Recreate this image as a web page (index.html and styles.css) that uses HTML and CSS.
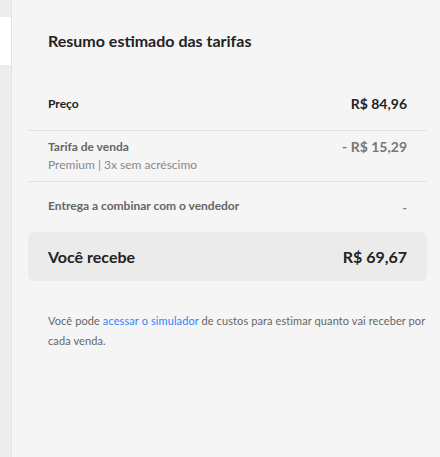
FILE: index.html
```html
<!DOCTYPE html>
<html lang="pt-BR">
<head>
<meta charset="utf-8">
<link rel="stylesheet" href="styles.css">
</head>
<body>
<div class="page">
  <aside class="side"><div class="side-card"></div></aside>
  <main class="panel">
    <h2 class="title">Resumo estimado das tarifas</h2>
    <div class="row row-price">
      <span class="label dark">Preço</span>
      <span class="value dark">R$ 84,96</span>
    </div>
    <div class="row row-fee">
      <div class="label-group">
        <span class="label">Tarifa de venda</span>
        <span class="sub">Premium | 3x sem acréscimo</span>
      </div>
      <span class="value">- R$ 15,29</span>
    </div>
    <div class="row row-ship">
      <span class="label">Entrega a combinar com o vendedor</span>
      <span class="value small">-</span>
    </div>
    <div class="total">
      <span>Você recebe</span>
      <span>R$ 69,67</span>
    </div>
    <p class="note">Você pode <a href="#">acessar o simulador</a> de custos para estimar quanto vai receber por cada venda.</p>
  </main>
</div>
</body>
</html>
```
FILE: styles.css
```css
* { box-sizing: border-box; }
html, body { margin: 0; padding: 0; }
body {
  font-family: Lato, "Open Sans", sans-serif;
  background: #f5f5f5;
  color: #333;
}
.page {
  display: flex;
  min-height: 457px;
}
.side {
  width: 12px;
  flex: none;
  background: #ededed;
  border-right: 1px solid #e3e3e3;
  padding-top: 17px;
}
.side-card {
  height: 48px;
  background: #fff;
}
.panel {
  flex: 1;
  padding: 31px 13px 0 16px;
  background: #f5f5f5;
}
.title {
  margin: 0 0 27px;
  padding: 0 20px;
  font-size: 16px;
  line-height: 20px;
  font-weight: 700;
  color: #222;
}
.row {
  display: flex;
  justify-content: space-between;
  align-items: flex-start;
  padding: 0 20px;
  border-bottom: 1px solid #e3e3e3;
}
.row-price { padding-top: 18px; padding-bottom: 18px; align-items: center; }
.row-fee { padding-top: 8px; padding-bottom: 6px; }
.row-ship { border-bottom: 0; padding-top: 16px; padding-bottom: 14px; }
.label {
  font-size: 12px;
  line-height: 16px;
  font-weight: 700;
  color: #666;
}
.label.dark { color: #222; }
.label-group { display: flex; flex-direction: column; }
.sub {
  font-size: 12px;
  line-height: 20px;
  color: #888;
}
.value {
  font-size: 14px;
  line-height: 16px;
  font-weight: 700;
  color: #777;
}
.value.dark { color: #222; }
.value.small { font-size: 12px; line-height: 20px; }
.total {
  display: flex;
  justify-content: space-between;
  align-items: center;
  height: 49px;
  padding: 0 20px;
  background: #ebebeb;
  border-radius: 6px;
  font-size: 16px;
  font-weight: 700;
  color: #222;
}
.note {
  margin: 30px 0 0;
  padding: 0 0 0 20px;
  font-size: 11px;
  letter-spacing: 0.1px;
  line-height: 20px;
  color: #666;
}
.note a { color: #3483fa; text-decoration: none; }
```
